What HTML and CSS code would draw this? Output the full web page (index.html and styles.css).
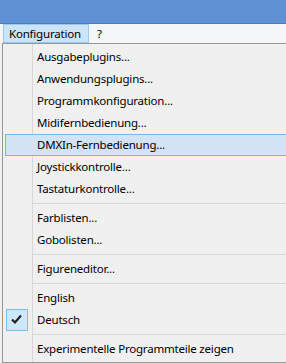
FILE: index.html
```html
<!DOCTYPE html>
<html>
<head>
<meta charset="utf-8">
<link rel="stylesheet" href="styles.css">
</head>
<body>
<div class="titlebar"></div>
<div class="menubar">
  <div class="mitem active">Konfiguration</div>
  <div class="mitem help">?</div>
</div>
<div class="area">
  <div class="dropdown">
    <div class="item">Ausgabeplugins...</div>
    <div class="item">Anwendungsplugins...</div>
    <div class="item">Programmkonfiguration...</div>
    <div class="item">Midifernbedienung...</div>
    <div class="item hover">DMXIn-Fernbedienung...</div>
    <div class="item">Joystickkontrolle...</div>
    <div class="item">Tastaturkontrolle...</div>
    <div class="sep"></div>
    <div class="item">Farblisten...</div>
    <div class="item">Gobolisten...</div>
    <div class="sep"></div>
    <div class="item">Figureneditor...</div>
    <div class="sep"></div>
    <div class="item">English</div>
    <div class="item checked">
      <span class="check"><svg width="20" height="20" viewBox="0 0 20 20"><path d="M5 9.5 L8 12.5 L14 5.5" fill="none" stroke="#222" stroke-width="2.2"/></svg></span>Deutsch
    </div>
    <div class="sep"></div>
    <div class="item">Experimentelle Programmteile zeigen</div>
  </div>
</div>
</body>
</html>
```
FILE: styles.css
```css
html, body {
  margin: 0;
  padding: 0;
}
body {
  width: 286px;
  height: 363px;
  overflow: hidden;
  background: #f0f0f0;
  font-family: "Noto Sans", "Open Sans", sans-serif;
  font-size: 11.5px;
  letter-spacing: -0.2px;
  color: #000;
}
.titlebar {
  height: 23px;
  background: #6091d4;
  border-bottom: 1px solid #4e7cbc;
}
.menubar {
  height: 19px;
  background: #f5f6f7;
  display: flex;
  align-items: stretch;
  padding-left: 3px;
}
.mitem {
  box-sizing: border-box;
  height: 19px;
  line-height: 17px;
  border: 1px solid transparent;
  padding: 0 6px 0 5px;
}
.mitem.help {
  padding-left: 7px;
}
.mitem.active {
  width: 86px;
  background: #cce4f7;
  border-color: #99c9ef;
}
.area {
  padding-left: 2px;
}
.dropdown {
  box-sizing: border-box;
  width: 290px;
  height: 320px;
  border: 1px solid #979797;
  padding: 2px;
  background-color: #f0f0f0;
  background-image: linear-gradient(to right, transparent 29px, #d7d7d7 29px, #d7d7d7 30px, transparent 30px);
}
.item {
  box-sizing: border-box;
  height: 22px;
  line-height: 20px;
  border: 1px solid transparent;
  padding-left: 31px;
  display: flex;
  align-items: center;
  position: relative;
  white-space: nowrap;
}
.item.hover {
  background: #d1e3f4;
  border-color: #7fb4ea;
}
.check {
  position: absolute;
  left: 0;
  top: -1px;
  width: 22px;
  height: 22px;
  box-sizing: border-box;
  background: #cce8ff;
  border: 1px solid #7fbbed;
  display: flex;
  align-items: center;
  justify-content: center;
}
.sep {
  height: 7px;
  position: relative;
}
.sep::after {
  content: "";
  position: absolute;
  left: 27px;
  right: 0;
  top: 3px;
  height: 1px;
  background: #d7d7d7;
}
```
